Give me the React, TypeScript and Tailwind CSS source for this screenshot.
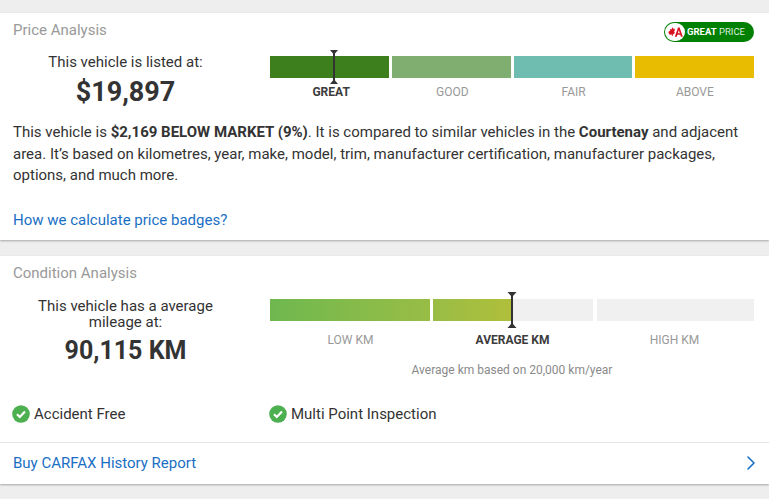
import { ChevronRight } from "lucide-react";

function Marker({ className, tall }: { className: string; tall?: boolean }) {
  return tall ? (
    <svg className={className} width="10" height="36" viewBox="0 0 10 36">
      <path d="M.5 0h9L6 4v28l3.5 4H.5L4 32V4z" fill="#333" />
    </svg>
  ) : (
    <svg className={className} width="10" height="34" viewBox="0 0 10 34">
      <path d="M1 0h8L6 3.5v27L9 34H1l3-3.5v-27z" fill="#333" />
    </svg>
  );
}

function Check() {
  return (
    <svg width="18" height="18" viewBox="0 0 18 18" className="shrink-0">
      <circle cx="9" cy="9" r="8.8" fill="#4caf50" />
      <path d="M5 9.2l2.8 2.8L13 6.6" fill="none" stroke="#fff" strokeWidth="2.2" />
    </svg>
  );
}

function Label({ text, active }: { text: string; active?: boolean }) {
  return (
    <div className={active ? "flex-1 text-center text-[12px] font-bold text-[#3c3c3c]" : "flex-1 text-center text-[12px] text-[#999]"}>
      {text}
    </div>
  );
}

export default function App() {
  return (
    <main className="h-[499px] w-[769px] overflow-hidden bg-[#eeeeee] pt-[13px] font-['Roboto',sans-serif] text-[#333]">
      <section className="relative h-[227px] bg-white px-[13px] shadow-[0_1px_2px_rgba(0,0,0,0.3)]">
        <h2 className="pt-[7px] text-[15px] leading-[20px] text-[#999]">Price Analysis</h2>

        <div className="absolute right-[15px] top-[9px] flex h-[20px] w-[90px] items-center rounded-full bg-[#008000] pl-[1px]">
          <div className="flex h-[18px] w-[20px] items-center justify-center rounded-full bg-white">
            <svg width="15" height="10" viewBox="0 0 15 10">
              <path d="M0.3 5L2.2 3.4 2 2l1.3.4L4.6 0.3 5.6 2 7 1.8 6.2 5 7 6 4.8 7.6 4.7 9H4L3.7 7.6 1.6 7.8z" fill="#d8101f" />
              <path d="M6.8 9.7L10 .5h1.6L14.8 9.7h-1.9l-.6-1.9H9.4l-.6 1.9zM9.9 6.2h1.9L10.8 3z" fill="#d8101f" />
            </svg>
          </div>
          <span className="ml-[2px] text-[9.5px] leading-none text-white"><b>GREAT</b> <span className="text-[#dcefdc]">PRICE</span></span>
        </div>

        <div className="flex pt-[12px]">
          <div className="w-[225px] text-center">
            <p className="text-[15px] leading-[20px]">This vehicle is listed at:</p>
            <p className="mt-[4px] text-[27px] font-bold leading-[32px]">$19,897</p>
          </div>
          <div className="ml-[32px] w-[484px] pt-[4px]">
            <div className="relative flex h-[22px] gap-[3px]">
              <div className="flex-1 bg-[#3d7f1d]" />
              <div className="flex-1 bg-[#7fae70]" />
              <div className="flex-1 bg-[#6fbcb0]" />
              <div className="flex-1 bg-[#e8bc00]" />
              <Marker className="absolute left-[59px] top-[-6px]" />
            </div>
            <div className="mt-[6px] flex gap-[3px] leading-[16px]">
              <div className="flex-1 pl-[2px] text-center text-[12px] font-bold text-[#3c3c3c]">GREAT</div>
              <Label text="GOOD" />
              <Label text="FAIR" />
              <Label text="ABOVE" />
            </div>
          </div>
        </div>

        <p className="mt-[14px] pr-[15px] text-[15px] leading-[21.5px]">
          This vehicle is <b>$2,169 BELOW MARKET (9%)</b>. It is compared to similar vehicles in the <b>Courtenay</b> and adjacent area. It’s based on kilometres, year, make, model, trim, manufacturer certification, manufacturer packages, options, and much more.
        </p>
        <a className="mt-[23px] block text-[15px] leading-[20px] text-[#1a6fc4]">How we calculate price badges?</a>
      </section>

      <section className="relative mt-[16px] h-[228px] bg-white shadow-[0_1px_2px_rgba(0,0,0,0.3)]">
        <div className="px-[13px]">
          <h2 className="pt-[7px] text-[15px] leading-[20px] text-[#999]">Condition Analysis</h2>
          <div className="flex pt-[15px]">
            <div className="w-[225px] text-center">
              <p className="text-[15px] leading-[16px]">This vehicle has a average mileage at:</p>
              <p className="mt-[5px] text-[25px] font-bold leading-[32px]">90,115 KM</p>
            </div>
            <div className="ml-[32px] w-[484px] pt-[1px]">
              <div className="relative flex h-[22px]">
                <div className="w-[160px] bg-gradient-to-r from-[#6eb84f] to-[#98bd45]" />
                <div className="ml-[3px] w-[160px] bg-[#f0f0f0]">
                  <div className="h-full w-[79px] bg-gradient-to-r from-[#98bd45] to-[#b0bf3a]" />
                </div>
                <div className="ml-[4px] w-[157px] bg-[#f0f0f0]" />
                <Marker tall className="absolute left-[237px] top-[-7px]" />
              </div>
              <div className="mt-[11px] flex gap-[3px] pl-[1px] leading-[16px]">
                <Label text="LOW KM" />
                <Label text="AVERAGE KM" active />
                <Label text="HIGH KM" />
              </div>
              <p className="mt-[14px] text-center text-[12px] leading-[16px] text-[#8a8a8a]">Average km based on 20,000 km/year</p>
            </div>
          </div>
          <div className="mt-[26px] flex">
            <div className="-ml-[1px] flex w-[257px] items-center gap-[4px] text-[15px] leading-[20px]">
              <Check />
              <span>Accident Free</span>
            </div>
            <div className="flex items-center gap-[4px] text-[15px] leading-[20px]">
              <Check />
              <span>Multi Point Inspection</span>
            </div>
          </div>
        </div>
        <div className="mt-[18px] flex h-[41px] items-center justify-between border-t border-[#e4e4e4] pl-[13px] pr-[6px]">
          <a className="text-[15px] text-[#1a6fc4]">Buy CARFAX History Report</a>
          <ChevronRight size={24} color="#1a6fc4" strokeWidth={1.6} />
        </div>
      </section>
    </main>
  );
}
